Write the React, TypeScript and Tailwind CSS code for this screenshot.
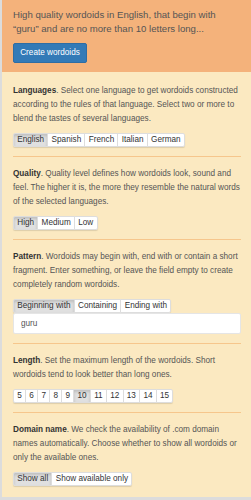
import { useState } from "react";

const font = { fontFamily: '"Liberation Sans", Arial, sans-serif' };

function Group({ items, active }: { items: string[]; active: string }) {
  return (
    <div className="mt-[7px] flex w-max rounded-[2px] shadow-[0_1px_1px_rgba(0,0,0,0.12)]">
      {items.map((item, i) => (
        <button
          key={item}
          className={`h-[14px] border border-[#ddd] px-[3.25px] text-[8.2px] leading-[12px] text-[#333] ${
            i > 0 ? "-ml-px" : ""
          } ${i === 0 ? "rounded-l-[2px]" : ""} ${i === items.length - 1 ? "rounded-r-[2px]" : ""} ${
            item === active
              ? "border-[#c8c8c8] bg-[#e0e0e0] shadow-[inset_0_2px_3px_rgba(0,0,0,0.15)]"
              : "bg-white"
          }`}
        >
          {item}
        </button>
      ))}
    </div>
  );
}

function Section({
  title,
  text,
  children,
  last,
}: {
  title: string;
  text: string;
  children: React.ReactNode;
  last?: boolean;
}) {
  return (
    <div className={`pt-[10px] pb-[9px] ${last ? "" : "border-b border-[#f6c68c]"}`}>
      <p className="text-[8.2px] leading-[14px] text-[#555]">
        <b className="text-[#333]">{title}</b>. {text}
      </p>
      {children}
    </div>
  );
}

export default function App() {
  const [pattern, setPattern] = useState("guru");

  return (
    <div style={font} className="h-[500px] w-[251px] border-b-[3px] border-l-2 border-[#dcdcdc] bg-[#fbe9c1]">
      <div className="bg-[#f4b27b] px-[11px] pt-[8px] pb-[9px]">
        <p className="text-[9.6px] leading-[14px] text-[#555]">
          High quality wordoids in English, that begin with “guru” and are no more than 10 letters long...
        </p>
        <button className="mt-[7px] h-[20px] w-[74px] rounded-[2px] border border-[#2e6da4] bg-[#337ab7] text-[8.2px] text-white">
          Create wordoids
        </button>
      </div>

      <div className="pl-[11px] pr-[10px] pt-[2px]">
        <Section
          title="Languages"
          text="Select one language to get wordoids constructed according to the rules of that language. Select two or more to blend the tastes of several languages."
        >
          <Group items={["English", "Spanish", "French", "Italian", "German"]} active="English" />
        </Section>

        <Section
          title="Quality"
          text="Quality level defines how wordoids look, sound and feel. The higher it is, the more they resemble the natural words of the selected languages."
        >
          <Group items={["High", "Medium", "Low"]} active="High" />
        </Section>

        <Section
          title="Pattern"
          text="Wordoids may begin with, end with or contain a short fragment. Enter something, or leave the field empty to create completely random wordoids."
        >
          <Group items={["Beginning with", "Containing", "Ending with"]} active="Beginning with" />
          <input
            value={pattern}
            onChange={(e) => setPattern(e.target.value)}
            className="block h-[21px] w-full rounded-[2px] border border-[#e5e5e5] bg-white px-[7px] text-[8.2px] text-[#555] outline-none"
          />
        </Section>

        <Section
          title="Length"
          text="Set the maximum length of the wordoids. Short wordoids tend to look better than long ones."
        >
          <Group items={["5", "6", "7", "8", "9", "10", "11", "12", "13", "14", "15"]} active="10" />
        </Section>

        <Section
          title="Domain name"
          text="We check the availability of .com domain names automatically. Choose whether to show all wordoids or only the available ones."
          last
        >
          <Group items={["Show all", "Show available only"]} active="Show all" />
        </Section>
      </div>
    </div>
  );
}
